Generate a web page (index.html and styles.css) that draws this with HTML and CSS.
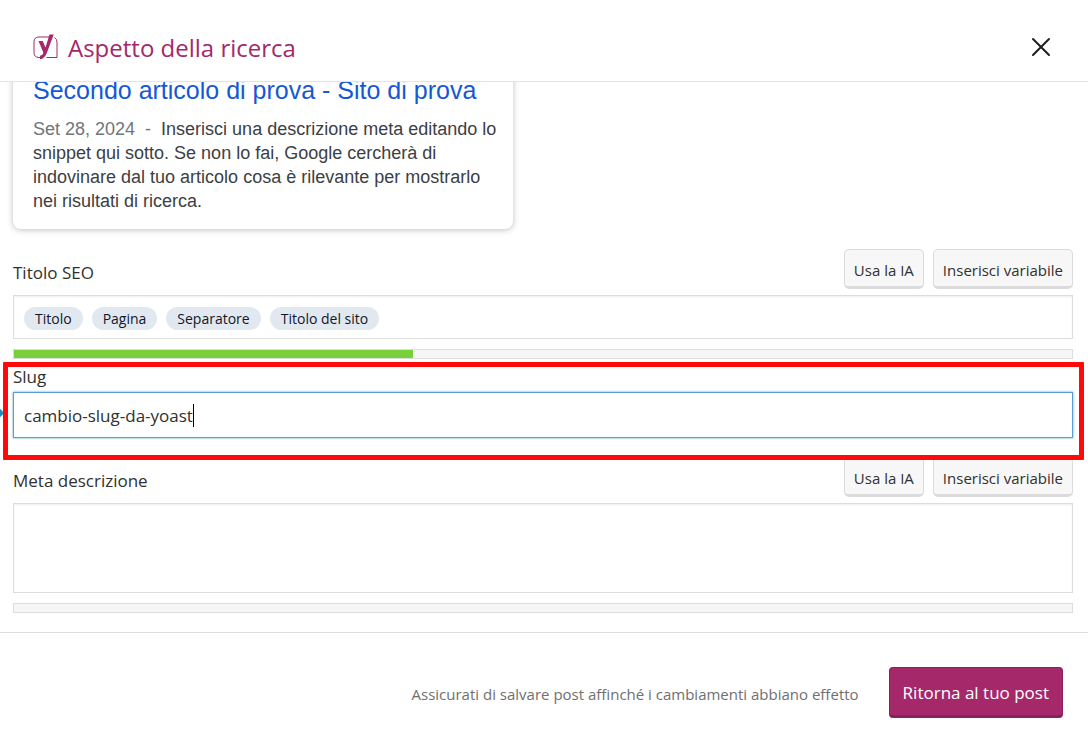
FILE: index.html
```html
<!DOCTYPE html>
<html lang="it">

<head>
    <meta charset="utf-8">
    <title>Aspetto della ricerca</title>
    <link rel="stylesheet" href="styles.css">
</head>

<body>
    <div class="modal">
        <header class="modal-header">
            <svg class="logo" viewBox="0 0 26 28" aria-hidden="true">
                <path d="M17 4H7Q2 4 2 9V19.500Q2 24.500 7 24.500H8M14.500 24.500H25V9Q25 6 22.500 4.500" fill="none" stroke="#a4286a" stroke-width="1" />
                <path d="M6.500 8H10.800L13.500 14.500L17.500 1.500H21.700L15 19.500Q12.800 25.800 8 26.200V22.800Q11 22.200 11.300 19.500Z" fill="#a4286a" />
            </svg>
            <h1>Aspetto della ricerca</h1>
            <button class="close" aria-label="Chiudi">
                <svg viewBox="0 0 20 20" aria-hidden="true">
                    <path d="M2 2L18 18M18 2L2 18" fill="none" stroke="#1e1e1e" stroke-width="2" stroke-linecap="round" />
                </svg>
            </button>
        </header>

        <main class="modal-content">
            <div class="snippet">
                <a href="#" class="snippet-title">Secondo articolo di prova - Sito di prova</a>
                <p class="snippet-text"><span class="date">Set 28, 2024 &nbsp;-&nbsp; </span>Inserisci una descrizione meta editando lo snippet qui sotto. Se non lo fai, Google cercherà di indovinare dal tuo articolo cosa è rilevante per mostrarlo nei risultati di ricerca.</p>
            </div>

            <section class="field">
                <div class="field-head">
                    <span class="label">Titolo SEO</span>
                    <button class="button">Usa la IA</button>
                    <button class="button">Inserisci variabile</button>
                </div>
                <div class="editor">
                    <span class="tag">Titolo</span>
                    <span class="tag">Pagina</span>
                    <span class="tag">Separatore</span>
                    <span class="tag">Titolo del sito</span>
                </div>
                <div class="progress">
                    <div class="progress-fill" style="width: 37.7%"></div>
                </div>
            </section>

            <section class="slug">
                <label class="label" for="slug">Slug</label>
                <div class="slug-box">
                    <input id="slug" type="text" value="cambio-slug-da-yoast">
                    <span class="caret"></span>
                </div>
                <div class="marker"></div>
                <div class="highlight"></div>
            </section>

            <section class="field">
                <div class="field-head">
                    <label class="label" for="meta">Meta descrizione</label>
                    <button class="button">Usa la IA</button>
                    <button class="button">Inserisci variabile</button>
                </div>
                <textarea id="meta" class="meta"></textarea>
                <div class="progress"></div>
            </section>
        </main>

        <footer class="modal-footer">
            <p>Assicurati di salvare post affinché i cambiamenti abbiano effetto</p>
            <button class="primary">Ritorna al tuo post</button>
        </footer>
    </div>
</body>

</html>
```
FILE: styles.css
```css
* {
    box-sizing: border-box;
}

body {
    margin: 0;
    background: #fff;
    color: #303030;
    font-family: "Segoe UI", "Open Sans", "Noto Sans", sans-serif;
    font-size: 17px;
}

button,
input,
textarea {
    font: inherit;
    color: inherit;
}

button {
    cursor: pointer;
}

.modal {
    display: flex;
    flex-direction: column;
    height: 100vh;
}

.modal-header {
    display: flex;
    align-items: center;
    height: 82px;
    padding: 12px 32px 0;
    border-bottom: 1px solid #e2e4e7;
}

.logo {
    width: 26px;
    height: 28px;
}

h1 {
    flex: 1;
    margin: 0 0 0 10px;
    padding-top: 2px;
    color: #a4286a;
    font-size: 24px;
    font-weight: 400;
}

.close {
    display: flex;
    padding: 5px;
    border: 0;
    background: none;
}

.close svg {
    width: 20px;
    height: 20px;
}

/* Scrolled to the end, so the top of the snippet is cut off */
.modal-content {
    display: flex;
    flex: 1;
    flex-direction: column;
    justify-content: flex-end;
    min-height: 0;
    padding: 0 15px 19px 13px;
    overflow: hidden;
}

.snippet {
    max-width: 500px;
    margin-bottom: 20px;
    padding: 20px 10px 16px 20px;
    border-radius: 8px;
    box-shadow: 0 1px 6px rgba(32, 33, 36, 0.28);
    font-family: Arial, "Liberation Sans", sans-serif;
}

.snippet-title {
    color: #1558d6;
    font-size: 25px;
    line-height: 32px;
    text-decoration: none;
}

.snippet-text {
    margin: 11px 0 0;
    color: #3c4043;
    font-size: 18px;
    line-height: 24px;
}

.date {
    color: #70757a;
}

.field-head {
    display: flex;
    align-items: center;
    gap: 9px;
    height: 40px;
    margin-bottom: 6px;
}

.label {
    flex: 1;
    line-height: 22px;
}

.field-head .label {
    padding-top: 7px;
}

.button {
    height: 40px;
    padding: 3px 9px 0;
    border: 1px solid #dbdbdb;
    border-bottom-width: 3px;
    border-radius: 5px;
    background: #f7f7f7;
    font-size: 15px;
}

.editor {
    display: flex;
    align-items: center;
    gap: 9px;
    height: 44px;
    padding: 3px 10px 0;
    border: 1px solid #ddd;
    box-shadow: inset 0 1px 2px rgba(0, 0, 0, 0.07);
}

.tag {
    padding: 1px 11px 0;
    border-radius: 12px;
    background: #e2e8f0;
    color: #0f172a;
    font-size: 14px;
    line-height: 22px;
}

.progress {
    height: 10px;
    margin-top: 10px;
    border: 1px solid #ddd;
    background: #f6f6f6;
}

.progress-fill {
    height: 100%;
    background: #7ad03a;
}

.slug {
    position: relative;
    display: flex;
    flex-direction: column;
    gap: 4px;
    margin: 7px 0 19px;
}

.slug-box {
    display: flex;
    align-items: center;
    height: 46px;
    padding: 0 10px;
    border: 1px solid #5b9dd9;
    box-shadow: 0 0 2px rgba(30, 140, 190, 0.8);
}

.slug-box input {
    field-sizing: content;
    padding: 0;
    border: 0;
    outline: 0;
    background: none;
}

.caret {
    width: 1px;
    height: 23px;
    background: #000;
}

.marker {
    position: absolute;
    top: 44px;
    left: -16px;
    width: 6px;
    height: 6px;
    background: #1e8cbe;
    transform: rotate(45deg);
}

.highlight {
    position: absolute;
    inset: -4px -11px -22px -10px;
    border: 5px solid #fe0a0a;
    border-radius: 1px;
    pointer-events: none;
    z-index: 1;
}

.meta {
    display: block;
    width: 100%;
    height: 90px;
    padding: 10px;
    border: 1px solid #ddd;
    box-shadow: inset 0 1px 2px rgba(0, 0, 0, 0.07);
    resize: none;
}

.modal-footer {
    display: flex;
    align-items: center;
    justify-content: flex-end;
    gap: 30px;
    height: 107px;
    padding: 12px 25px 0;
    border-top: 1px solid #ddd;
}

.modal-footer p {
    margin: 4px 0 0;
    color: #707070;
    font-size: 15px;
}

.primary {
    height: 51px;
    padding: 2px 13px 0;
    border: 1px solid #8a2059;
    border-bottom-width: 3px;
    border-radius: 4px;
    background: #a4286a;
    color: #fff;
    font-size: 17px;
}
```
